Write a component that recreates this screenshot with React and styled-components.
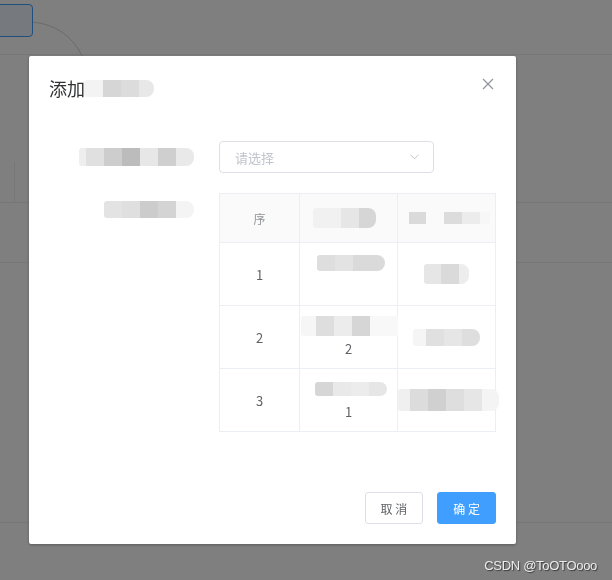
import { Fragment } from "react";
import styled, { createGlobalStyle } from "styled-components";

const GlobalStyle = createGlobalStyle`
  body {
    margin: 0;
    font-family: "Noto Sans CJK SC", "Noto Sans", sans-serif;
    background: #fff;
  }
`;

// ---------- page behind the dialog ----------
const Page = styled.div`
  width: 612px;
  height: 580px;
  display: flex;
  flex-direction: column;
  overflow: hidden;
`;

const TopBar = styled.div`
  position: relative;
  height: 55px;
  padding-top: 4px;
  box-sizing: border-box;
  border-bottom: 1px solid #eeeeee;
`;

const PageButton = styled.div`
  margin-left: -6px;
  width: 39px;
  height: 33px;
  box-sizing: border-box;
  border: 1px solid #3f9eff;
  border-radius: 4px;
  background: #ecf5ff;
`;

const Arc = styled.svg`
  position: absolute;
  left: 0;
  top: 0;
`;

const Spacer = styled.div`
  height: ${(p) => p.$h}px;
  flex-shrink: 0;
  border-bottom: ${(p) => (p.$line ? "1px solid #eeeeee" : "none")};
`;

const BgRow = styled.div`
  height: ${(p) => p.$h}px;
  flex-shrink: 0;
  display: flex;
  border-bottom: 1px solid #eeeeee;
  box-sizing: border-box;
`;

const BgCell = styled.div`
  width: 14px;
  border-right: 1px solid #eeeeee;
`;

// ---------- modal ----------
const Overlay = styled.div`
  position: fixed;
  inset: 0;
  background: rgba(0, 0, 0, 0.5);
`;

const Dialog = styled.div`
  position: relative;
  margin: 56px 0 0 29px;
  width: 487px;
  background: #fff;
  border-radius: 2px;
  box-shadow: 0 1px 3px rgba(0, 0, 0, 0.3);
`;

const Header = styled.div`
  padding: 20px 20px 10px;
  display: flex;
  align-items: center;
`;

const Title = styled.span`
  font-size: 18px;
  line-height: 24px;
  color: #303133;
`;

const CloseBtn = styled.button`
  position: absolute;
  top: 22px;
  right: 22px;
  width: 12px;
  height: 12px;
  padding: 0;
  border: 0;
  background: transparent;
  display: flex;
`;

const Body = styled.div`
  padding: 31px 20px 30px;
`;

const FormItem = styled.div`
  display: flex;
  margin-bottom: ${(p) => p.$mb}px;
`;

const Label = styled.div`
  width: 170px;
  flex-shrink: 0;
  box-sizing: border-box;
  padding-right: 25px;
  height: 32px;
  display: flex;
  align-items: center;
  justify-content: flex-end;
`;

const Select = styled.div`
  width: 215px;
  height: 32px;
  box-sizing: border-box;
  border: 1px solid #dcdfe6;
  border-radius: 4px;
  display: flex;
  align-items: center;
  justify-content: space-between;
  padding: 0 14px 0 15px;
  font-size: 13px;
  color: #c0c4cc;
`;

const Mosaic = styled.div`
  display: flex;
  height: ${(p) => p.$h}px;
  margin-left: ${(p) => p.$dx || 0}px;
`;

const Tile = styled.span`
  display: block;
  width: ${(p) => p.$w}px;
  height: 100%;
  background: ${(p) => p.$c};
  &:first-child {
    border-radius: ${(p) => (p.$soft ? "3px 0 0 3px" : "0")};
  }
  &:last-child {
    border-radius: ${(p) => (p.$soft ? "0 8px 8px 0" : "0")};
  }
`;

const Grid = styled.div`
  display: grid;
  grid-template-columns: 80px 98px 98px;
  width: 277px;
  box-sizing: border-box;
  border-top: 1px solid #ebeef5;
  border-left: 1px solid #ebeef5;
`;

const Cell = styled.div`
  height: ${(p) => (p.$head ? 49 : 63)}px;
  box-sizing: border-box;
  border-right: 1px solid #ebeef5;
  border-bottom: 1px solid #ebeef5;
  background: ${(p) => (p.$head ? "#fafafa" : "#fff")};
  display: flex;
  flex-direction: column;
  align-items: center;
  justify-content: center;
  font-size: ${(p) => (p.$head ? 12 : 13)}px;
  line-height: 23px;
  color: ${(p) => (p.$head ? "#909399" : "#606266")};
`;

const Line = styled.div`
  height: 23px;
  display: flex;
  align-items: center;
  justify-content: center;
`;

const Footer = styled.div`
  display: flex;
  justify-content: flex-end;
  gap: 14px;
  padding: 10px 20px 20px;
`;

const Button = styled.button`
  height: 32px;
  box-sizing: border-box;
  padding: 0 15px;
  border-radius: 3px;
  font-family: "Noto Sans CJK SC", sans-serif;
  font-size: 12px;
  border: 1px solid ${(p) => (p.$primary ? "#409eff" : "#dcdfe6")};
  background: ${(p) => (p.$primary ? "#409eff" : "#fff")};
  color: ${(p) => (p.$primary ? "#fff" : "#606266")};
`;

const Watermark = styled.div`
  position: fixed;
  right: 15px;
  bottom: 7px;
  font-family: "Liberation Sans", Arial, sans-serif;
  font-size: 13px;
  letter-spacing: -0.3px;
  color: #ececec;
  text-shadow: 1px 1px 1px rgba(0, 0, 0, 0.55);
`;

function Blur({ tiles, h, soft, dx }) {
  return (
    <Mosaic $h={h} $dx={dx}>
      {tiles.map(([w, c], i) => (
        <Tile key={i} $w={w} $c={c} $soft={soft} />
      ))}
    </Mosaic>
  );
}

const rows = [
  {
    no: "1",
    name: { h: 16, dx: 4, tiles: [[18, "#dedede"], [18, "#e3e3e3"], [32, "#dadada"]] },
    sub: "",
    spec: { h: 20, tiles: [[17, "#e6e6e6"], [18, "#dadada"], [10, "#ededed"]] },
  },
  {
    no: "2",
    name: { h: 20, dx: 8, tiles: [[15, "#f6f6f6"], [18, "#dedede"], [18, "#ececec"], [18, "#d6d6d6"], [34, "#f8f8f8"]] },
    sub: "2",
    spec: { h: 17, tiles: [[13, "#f5f5f5"], [18, "#e0e0e0"], [18, "#e6e6e6"], [18, "#dedede"]] },
  },
  {
    no: "3",
    name: { h: 14, dx: 4, tiles: [[18, "#d6d6d6"], [18, "#e9e9e9"], [18, "#ececec"], [18, "#e6e6e6"]] },
    sub: "1",
    spec: { h: 22, dx: 3, tiles: [[12, "#f0f0f0"], [18, "#dcdcdc"], [18, "#d0d0d0"], [18, "#dedede"], [18, "#e6e6e6"], [17, "#f4f4f4"]] },
  },
];

export default function App() {
  return (
    <>
      <GlobalStyle />
      <Page>
        <TopBar>
          <PageButton />
          <Arc width="120" height="70" viewBox="0 0 120 70">
            <path d="M33 22.2 A58 58 0 0 1 82 56" fill="none" stroke="#d4d4d4" strokeWidth="1" />
          </Arc>
        </TopBar>
        <Spacer $h={107} />
        <BgRow $h={41}>
          <BgCell />
        </BgRow>
        <BgRow $h={60} />
        <Spacer $h={259} $line />
      </Page>

      <Overlay>
        <Dialog>
          <Header>
            <Title>添加</Title>
            <Blur
              h={17}
              soft
              dx={-1}
              tiles={[[19, "#f3f3f3"], [18, "#d6d6d6"], [18, "#dcdcdc"], [15, "#e8e8e8"]]}
            />
          </Header>
          <CloseBtn aria-label="关闭">
            <svg width="12" height="12" viewBox="0 0 12 12">
              <path d="M1 1 L11 11 M11 1 L1 11" stroke="#909399" strokeWidth="1.2" fill="none" />
            </svg>
          </CloseBtn>

          <Body>
            <FormItem $mb={20}>
              <Label>
                <Blur
                  h={18}
                  soft
                  tiles={[[7, "#eeeeee"], [18, "#e0e0e0"], [18, "#cdcdcd"], [18, "#bcbcbc"], [18, "#e7e7e7"], [18, "#cfcfcf"], [18, "#e9e9e9"]]}
                />
              </Label>
              <Select>
                <span>请选择</span>
                <svg width="9" height="6" viewBox="0 0 9 6">
                  <path d="M0.5 0.8 L4.5 4.8 L8.5 0.8" stroke="#c0c4cc" strokeWidth="1" fill="none" />
                </svg>
              </Select>
            </FormItem>

            <FormItem $mb={20}>
              <Label>
                <Blur
                  h={17}
                  soft
                  tiles={[[18, "#e3e3e3"], [18, "#dfdfdf"], [18, "#cccccc"], [18, "#d4d4d4"], [18, "#f4f4f4"]]}
                />
              </Label>
              <Grid>
                <Cell $head>序</Cell>
                <Cell $head>
                  <Blur h={20} dx={-8} soft tiles={[[28, "#f1f1f1"], [18, "#e6e6e6"], [17, "#d6d6d6"]]} />
                </Cell>
                <Cell $head>
                  <Blur h={12} dx={6} tiles={[[17, "#dadada"], [18, "#fafafa"], [18, "#dcdcdc"], [18, "#ececec"], [10, "#f7f7f7"]]} />
                </Cell>
                {rows.map((r) => (
                  <Fragment key={r.no}>
                    <Cell>{r.no}</Cell>
                    <Cell>
                      <Line>
                        <Blur h={r.name.h} dx={r.name.dx} soft tiles={r.name.tiles} />
                      </Line>
                      <Line>{r.sub}</Line>
                    </Cell>
                    <Cell>
                      <Blur h={r.spec.h} dx={r.spec.dx} soft tiles={r.spec.tiles} />
                    </Cell>
                  </Fragment>
                ))}
              </Grid>
            </FormItem>
          </Body>

          <Footer>
            <Button>取 消</Button>
            <Button $primary>确 定</Button>
          </Footer>
        </Dialog>
      </Overlay>
      <Watermark>CSDN @ToOTOooo</Watermark>
    </>
  );
}
